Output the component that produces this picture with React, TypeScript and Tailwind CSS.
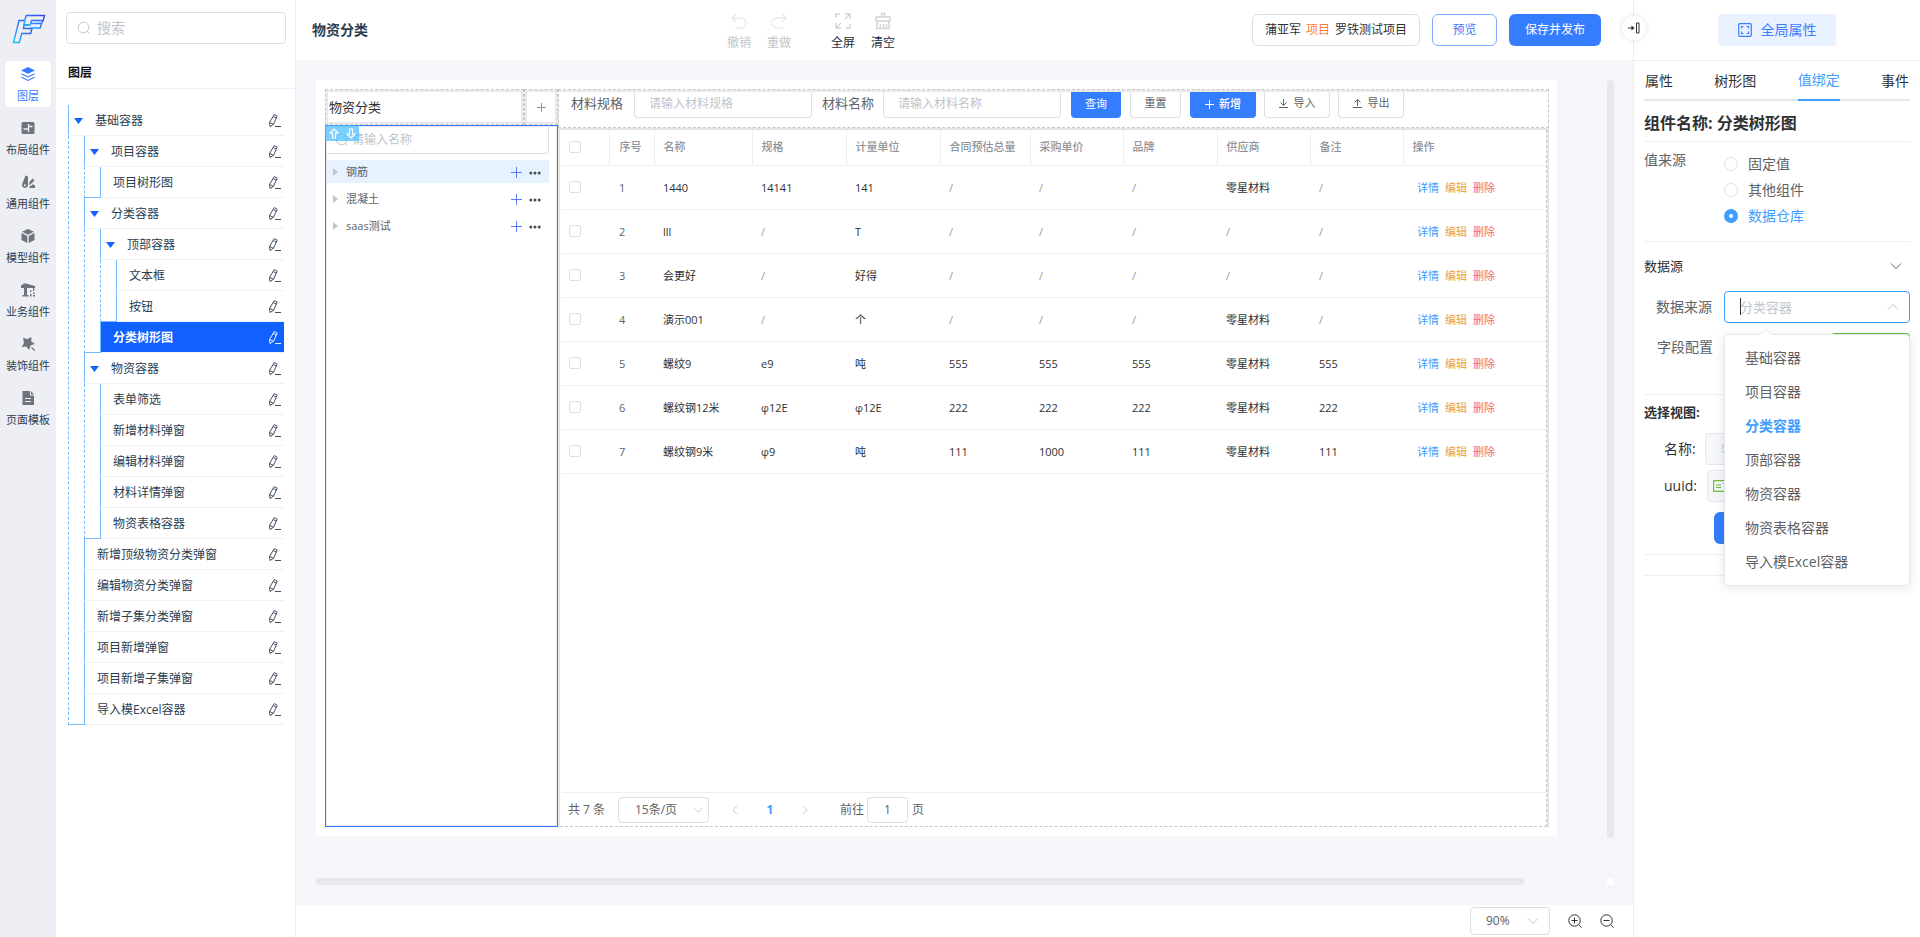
import { useState } from "react";
import type { ReactNode } from "react";
import clsx from "clsx";

type Node = { label: string; children?: Node[] };

const tree: Node = {
  label: "基础容器",
  children: [
    { label: "项目容器", children: [{ label: "项目树形图" }] },
    {
      label: "分类容器",
      children: [
        { label: "顶部容器", children: [{ label: "文本框" }, { label: "按钮" }] },
        { label: "分类树形图" },
      ],
    },
    {
      label: "物资容器",
      children: [
        { label: "表单筛选" },
        { label: "新增材料弹窗" },
        { label: "编辑材料弹窗" },
        { label: "材料详情弹窗" },
        { label: "物资表格容器" },
      ],
    },
    { label: "新增顶级物资分类弹窗" },
    { label: "编辑物资分类弹窗" },
    { label: "新增子集分类弹窗" },
    { label: "项目新增弹窗" },
    { label: "项目新增子集弹窗" },
    { label: "导入模Excel容器" },
  ],
};

const columns = ["名称", "规格", "计量单位", "合同预估总量", "采购单价", "品牌", "供应商", "备注"];

const rows = [
  ["1440", "14141", "141", "/", "/", "/", "零星材料", "/"],
  ["lll", "/", "T", "/", "/", "/", "/", "/"],
  ["会更好", "/", "好得", "/", "/", "/", "/", "/"],
  ["演示001", "/", "个", "/", "/", "/", "零星材料", "/"],
  ["螺纹9", "e9", "吨", "555", "555", "555", "零星材料", "555"],
  ["螺纹钢12米", "φ12E", "φ12E", "222", "222", "222", "零星材料", "222"],
  ["螺纹钢9米", "φ9", "吨", "111", "1000", "111", "零星材料", "111"],
];

const sources = ["基础容器", "项目容器", "分类容器", "顶部容器", "物资容器", "物资表格容器", "导入模Excel容器"];

const rail: { label: string; icon: ReactNode }[] = [
  {
    label: "图层",
    icon: (
      <>
        <path d="M8 1l7 3.4-7 3.4-7-3.4z" fill="currentColor" />
        <path d="M1.5 7.8L8 11l6.500-3.200M1.500 11.300L8 14.500l6.500-3.200" fill="none" stroke="currentColor" strokeWidth="1.1" />
      </>
    ),
  },
  {
    label: "布局组件",
    icon: (
      <>
        <rect x="1.500" y="2" width="13" height="12" rx="1.500" fill="currentColor" />
        <path d="M8.500 4v8M3.500 9h5M8.500 6.500h4" stroke="#eeeff4" strokeWidth="1.300" fill="none" />
      </>
    ),
  },
  {
    label: "通用组件",
    icon: (
      <>
        <path d="M5.500 1.500L8 2.500v9a2.800 2.800 0 1 1-5.800-1.500z" fill="currentColor" />
        <path d="M9.300 8.500l3.200-4 2 2-5.200 5z" fill="currentColor" />
        <path d="M9.500 12.800l3.500-2.600 2 1.300V14H9.300z" fill="currentColor" />
        <circle cx="4.900" cy="11.300" r="1" fill="#eeeff4" />
      </>
    ),
  },
  {
    label: "模型组件",
    icon: (
      <path d="M8 1l6 2.800L8 6.800 2 3.800zM1.500 5l5.800 2.900v7.100L1.500 12zM14.500 5L8.700 7.900v7.100l5.800-3z" fill="currentColor" />
    ),
  },
  {
    label: "业务组件",
    icon: (
      <path d="M1 3.500L4 1.500h2l9 2.500v2H7v7h1.500v1.500h-6V13H4V6H1zM10 8.500h1.500V10H10zM13 6h1.200v3H13zM10 12h1.500v2.500H10zM13 10.500h1.500V12H13zM13 13h2v1.500h-2z" fill="currentColor" />
    ),
  },
  {
    label: "装饰组件",
    icon: (
      <>
        <path d="M3 1.500l4 1.700L11.500 1l-.3 4.300L15 8l-4.200 1.300L9 14l-2.700-3.500-4.600.500 2.300-4z" fill="currentColor" />
        <path d="M11.500 11.500l3.200 3" stroke="currentColor" strokeWidth="1.200" />
      </>
    ),
  },
  {
    label: "页面模板",
    icon: (
      <>
        <path d="M2.500 1h7.500v4.500h4V15H2.500zM11 1l3 3.500h-3z" fill="currentColor" />
        <path d="M5 8.500h6M5 11.500h6" stroke="#eeeff4" strokeWidth="1.200" />
      </>
    ),
  },
];

function Logo() {
  return (
    <svg viewBox="0 0 34 30" className="h-[30px] w-[34px]" fill="none" strokeWidth="1.4">
      <defs>
        <linearGradient id="logo" x1="0" y1="1" x2="1" y2="0">
          <stop offset="0" stopColor="#12c8ff" />
          <stop offset="0.5" stopColor="#2f7bff" />
          <stop offset="1" stopColor="#3d3df0" />
        </linearGradient>
      </defs>
      <path d="M12 6.500H7L1.500 28.500h5.800l2.400-9h9l1.300-5H11.300l.9-3.500h4" stroke="url(#logo)" />
      <path d="M14 1.500h18.500L31.200 6.500H19.500l-.8 3h10.800l-1.200 4.500H18.400M14 1.500l-2.200 9.500h6.900M31.200 6.500L29.500 9.500" stroke="url(#logo)" />
    </svg>
  );
}

function EditIcon() {
  return (
    <svg viewBox="0 0 13 13" className="h-[13px] w-[13px]" fill="none" stroke="currentColor" strokeWidth="0.9">
      <path d="M6.200 0.600l3 1.500-3.700 8.200L2 12.500l-.5-4zM5.300 2.600l3 1.500M1.600 8.500l3.700 1.700M7 12.500h6" />
    </svg>
  );
}

function Chevron({ up = false, className }: { up?: boolean; className?: string }) {
  return (
    <svg viewBox="0 0 12 12" className={clsx("pointer-events-none h-3 w-3", className)} fill="none" stroke="currentColor">
      <path d={up ? "M1 8.500l5-5 5 5" : "M1 3.500l5 5 5-5"} />
    </svg>
  );
}

function SearchIcon() {
  return (
    <svg viewBox="0 0 14 14" className="h-[14px] w-[14px] shrink-0" fill="none" stroke="#c0c4cc">
      <circle cx="6.500" cy="6.500" r="5.300" />
      <path d="M10.300 10.300l2 2.200" />
    </svg>
  );
}

function TreeNode({ node, selected, onSelect }: { node: Node; selected: string; onSelect: (s: string) => void }) {
  const active = node.label === selected;
  return (
    <li>
      <div
        className={clsx(
          "flex h-[31px] items-center border-b border-l border-b-[#f0f1f4] border-l-[#79bbff] pt-px pr-[3px]",
          active ? "bg-[#1061ff] font-bold text-white" : "text-[#2c3e50]",
        )}
      >
        {node.children && (
          <svg viewBox="0 0 9 6" className="mr-3 ml-[5px] h-[6px] w-[9px] shrink-0">
            <path d="M0 0h9L4.500 6z" fill="#1061ff" />
          </svg>
        )}
        <button onClick={() => onSelect(node.label)} className={clsx("flex-1 text-left text-xs", !node.children && "pl-3")}>
          {node.label}
        </button>
        <button aria-label="编辑">
          <EditIcon />
        </button>
      </div>
      {node.children && (
        <ul className="relative border-l border-dashed border-[#79bbff] pl-[15px]">
          {node.children.map((c) => (
            <TreeNode key={c.label} node={c} selected={selected} onSelect={onSelect} />
          ))}
          <span className="absolute bottom-0 -left-px h-px w-[17px] bg-[#79bbff]" />
        </ul>
      )}
    </li>
  );
}

function Sidebar() {
  const [selected, setSelected] = useState("分类树形图");
  return (
    <aside className="w-60 shrink-0 border-r border-[#ebeef5] bg-white">
      <label className="mx-[10px] mt-3 mr-[9px] flex h-8 items-center gap-[6px] rounded border border-[#dcdfe6] pl-[10px]">
        <SearchIcon />
        <input aria-label="搜索" placeholder="搜索" className="w-full min-w-0 text-sm outline-none placeholder:text-[#c0c4cc]" />
      </label>
      <h2 className="mt-4 h-[29px] border-b border-[#ebeef5] pl-3 text-xs leading-[26px] font-bold text-[#111]">图层</h2>
      <ul className="mt-4 pr-[11px] pl-3">
        <TreeNode node={tree} selected={selected} onSelect={setSelected} />
      </ul>
    </aside>
  );
}

function Tool({ label, off, children }: { label: string; off?: boolean; children: ReactNode }) {
  return (
    <button disabled={off} className={clsx("flex w-10 flex-col items-center gap-[5px] text-xs leading-4", off ? "text-[#c0c4cc]" : "text-[#1f2d3d]")}>
      <svg viewBox="0 0 18 18" className={clsx("h-[18px] w-[18px]", off ? "text-[#e9eaed]" : "text-[#d4d4d4]")} fill="none" stroke="currentColor" strokeWidth="1.4">
        {children}
      </svg>
      {label}
    </button>
  );
}

function Header() {
  return (
    <header className="flex h-[60px] shrink-0 bg-white pr-8">
      <h1 className="w-[423px] shrink-0 pl-4 text-sm leading-[60px] font-bold text-[#2c3e50]">物资分类</h1>
      <div className="flex pt-3">
        <Tool label="撤销" off>
          <path d="M6 2L2 6l4 4M2 6h9a5 5 0 0 1 0 10H5" />
        </Tool>
        <Tool label="重做" off>
          <path d="M12 2l4 4-4 4M16 6H7a5 5 0 0 0 0 10h6" />
        </Tool>
        <span className="w-6" />
        <Tool label="全屏">
          <path d="M2 6V2h4M16 12v4h-4M11 2h5v5M16 2l-5 5M7 16H2v-5M2 16l5-5" />
        </Tool>
        <Tool label="清空">
          <path d="M7.500 5V1.500h3V5M2 5h14v4H2zM3.500 9L2.500 16.500h13L14.500 9M6.500 12l-.5 4M9.500 12v4M12.500 12v4" />
        </Tool>
      </div>
      <div className="ml-auto flex gap-3 pt-[14px] text-xs">
        <div className="flex h-8 items-center gap-[5px] rounded-md border border-[#dcdfe6] px-3 text-[#303133]">
          <span>蒲亚军</span>
          <span className="text-[#ff7d2e]">项目</span>
          <span>罗铁测试项目</span>
        </div>
        <button className="h-8 w-[65px] rounded-md border border-[#7fabff] text-[#3a7dff]">预览</button>
        <button className="h-8 w-[92px] rounded-md bg-[#347dff] text-white">保存并发布</button>
      </div>
    </header>
  );
}

// grey frame the designer draws round each container
const frame = "border border-dashed border-[#c6c6c6] shadow-[inset_0_0_0_2px_#e9e9e9]";

function CategoryTree() {
  return (
    <section className="flex w-[233px] shrink-0 flex-col">
      <div className="flex h-9">
        <div className={clsx("flex-1 pl-[3px] text-[13px] leading-[34px] text-[#303133]", frame)}>物资分类</div>
        <button aria-label="新增分类" className={clsx("flex w-[34px] items-center justify-center text-[#909399]", frame)}>
          <svg viewBox="0 0 9 9" className="h-[9px] w-[9px]" stroke="currentColor">
            <path d="M4.500 0v9M0 4.500h9" />
          </svg>
        </button>
      </div>
      <div className="relative flex-1 border border-[#347dff] pr-2 shadow-[inset_0_0_0_1px_#e9e9e9]">
        <label className="ml-px flex h-7 items-center gap-[3px] rounded-br border-r border-b border-[#dcdfe6] pl-2">
          <SearchIcon />
          <input aria-label="请输入名称" placeholder="请输入名称" className="w-full min-w-0 text-xs outline-none placeholder:text-[#c0c4cc]" />
        </label>
        <span className="absolute -top-px -left-px flex h-4 w-[34px] items-center justify-around bg-[#45bcff]/70 text-white">
          <svg viewBox="0 0 10 11" className="h-[11px] w-[10px]" fill="none" stroke="currentColor" strokeWidth="1.2">
            <path d="M5 1l4 4H6.500v5h-3V5H1z" />
          </svg>
          <svg viewBox="0 0 10 11" className="h-[11px] w-[10px]" fill="none" stroke="currentColor" strokeWidth="1.2">
            <path d="M5 10l4-4H6.500V1h-3v5H1z" />
          </svg>
        </span>
        <ul className="mt-[6px] ml-px flex flex-col gap-1 text-[11px] text-[#606266]">
          {["钢筋", "混凝土", "saas测试"].map((t, i) => (
            <li key={t} className={clsx("flex h-[23px] items-center pt-px pr-2 pl-[6px]", i === 0 && "bg-[#e6f2ff]")}>
              <svg viewBox="0 0 5 8" className="mr-2 h-2 w-[5px]">
                <path d="M0 0l5 4-5 4z" fill="#c0c4cc" />
              </svg>
              <span className="flex-1">{t}</span>
              <button aria-label="新增" className="mr-[7px] text-[#5b7cff]">
                <svg viewBox="0 0 11 11" className="h-[11px] w-[11px]" stroke="currentColor">
                  <path d="M5.500 0v11M0 5.500h11" />
                </svg>
              </button>
              <button aria-label="更多" className="pt-[2px] text-[#4a4d52]">
                <svg viewBox="0 0 12 4" className="h-1 w-3" fill="currentColor">
                  <circle cx="1.800" cy="2" r="1.500" />
                  <circle cx="6" cy="2" r="1.500" />
                  <circle cx="10.200" cy="2" r="1.500" />
                </svg>
              </button>
            </li>
          ))}
        </ul>
      </div>
    </section>
  );
}

function FilterForm() {
  const input = "h-7 min-w-0 w-[178px] rounded-b border border-t-0 border-[#dcdfe6] px-[14px] text-xs outline-none placeholder:text-[#c0c4cc]";
  const plain = "flex h-7 items-center justify-center rounded-b border border-t-0 border-[#dcdfe6] text-[#606266]";
  return (
    <div className="h-[39px] border border-dashed border-[#c6c6c6]">
      <form className="flex h-full items-start overflow-hidden border-t-2 border-[#e9e9e9] pl-3 text-[11px]" onSubmit={(e) => e.preventDefault()}>
        <div className="-mt-[2px] flex items-center">
          <label htmlFor="spec" className="w-[63px] text-[13px] text-[#606266]">材料规格</label>
          <input id="spec" className={input} placeholder="请输入材料规格" />
          <label htmlFor="name" className="ml-[10px] w-[61px] text-[13px] text-[#606266]">材料名称</label>
          <input id="name" className={input} placeholder="请输入材料名称" />
          <button className="ml-[10px] h-7 w-[50px] rounded-b bg-[#347dff] text-white">查询</button>
          <button type="reset" className={clsx("ml-[9px] w-[51px]", plain)}>重置</button>
          <button type="button" className="ml-[9px] flex h-7 w-[66px] items-center justify-center gap-[5px] rounded-b bg-[#347dff] font-medium text-white">
            <svg viewBox="0 0 9 9" className="h-[9px] w-[9px]" stroke="currentColor">
              <path d="M4.500 0v9M0 4.500h9" />
            </svg>
            新增
          </button>
          <button type="button" className={clsx("ml-2 w-[66px] gap-[6px]", plain)}>
            <svg viewBox="0 0 9 9" className="h-[9px] w-[9px]" fill="none" stroke="currentColor">
              <path d="M4.500 0v6M1.500 3.500l3 3 3-3M0 8.500h9" />
            </svg>
            导入
          </button>
          <button type="button" className={clsx("ml-2 w-[66px] gap-[6px]", plain)}>
            <svg viewBox="0 0 9 9" className="h-[9px] w-[9px]" fill="none" stroke="currentColor">
              <path d="M4.500 7V1M1.500 3.500l3-3 3 3M0 8.500h9" />
            </svg>
            导出
          </button>
        </div>
      </form>
    </div>
  );
}

function MaterialTable() {
  const box = "block h-3 w-3 appearance-none rounded-[2px] border border-[#dcdfe6] bg-white";
  return (
    <table className="w-full table-fixed border-collapse text-left text-[11px] text-[#303133]">
      <colgroup>
        <col className="w-[47px]" />
        <col className="w-[45px]" />
        <col className="w-[98px]" />
        <col className="w-[94px]" />
        <col className="w-[94px]" />
        <col className="w-[90px]" />
        <col className="w-[93px]" />
        <col className="w-[94px]" />
        <col className="w-[93px]" />
        <col className="w-[93px]" />
        <col />
      </colgroup>
      <thead className="text-[#909399]">
        <tr className="h-[35px] border-b border-[#ebeef5]">
          <th className="border-r border-[#ebeef5] pl-[7px]">
            <input type="checkbox" aria-label="全选" className={box} />
          </th>
          <th className="border-r border-[#ebeef5] pl-[10px] font-medium">序号</th>
          {columns.map((c) => (
            <th key={c} className="border-r border-[#ebeef5] pl-[9px] font-medium whitespace-nowrap">{c}</th>
          ))}
          <th className="pl-[9px] font-medium">操作</th>
        </tr>
      </thead>
      <tbody>
        {rows.map((r, i) => (
          <tr key={i} className="h-11 border-b border-[#ebeef5]">
            <td className="pl-[7px]">
              <input type="checkbox" aria-label={`选择${i + 1}`} className={box} />
            </td>
            <td className="pt-[2px] pl-[10px] text-[#606266]">{i + 1}</td>
            {r.map((v, j) => (
              <td key={j} className={clsx("pt-[2px] pl-[9px]", v === "/" && "text-[#999]")}>{v}</td>
            ))}
            <td className="pt-[2px] pl-[14px]">
              <div className="flex gap-[6px]">
                <a href="#" className="text-[#409eff]">详情</a>
                <a href="#" className="text-[#e6a23c]">编辑</a>
                <a href="#" className="text-[#f56c6c]">删除</a>
              </div>
            </td>
          </tr>
        ))}
      </tbody>
    </table>
  );
}

function Pagination() {
  return (
    <nav className="flex h-[34px] items-center border-t border-[#ebeef5] pl-[6px] text-xs text-[#606266]">
      <span className="w-[50px]">共 7 条</span>
      <div className="relative">
        <select aria-label="每页条数" className="h-[26px] w-[91px] appearance-none rounded border border-[#dcdfe6] pl-4 outline-none">
          <option>15条/页</option>
        </select>
        <Chevron className="absolute top-2 right-[6px] !h-[10px] !w-[10px] text-[#c0c4cc]" />
      </div>
      <button aria-label="上一页" className="ml-[21px] text-[#c0c4cc]">
        <Chevron className="!h-[10px] !w-[10px] rotate-90" />
      </button>
      <button className="ml-6 w-3 font-bold text-[#409eff]">1</button>
      <button aria-label="下一页" className="ml-6 text-[#c0c4cc]">
        <Chevron className="!h-[10px] !w-[10px] -rotate-90" />
      </button>
      <label htmlFor="page" className="ml-[30px]">前往</label>
      <input id="page" defaultValue="1" className="ml-[3px] h-[26px] w-[41px] rounded border border-[#dcdfe6] text-center outline-none" />
      <span className="ml-1">页</span>
    </nav>
  );
}

function Canvas() {
  return (
    <div className="flex flex-1 flex-col bg-[#f4f6fa] py-5 pr-[19px] pl-5">
      <div className="flex flex-1">
        <div className="mb-[2px] flex min-w-0 flex-1 bg-white py-[9px] pr-2 pl-[9px]">
          <CategoryTree />
          <section className="flex min-w-0 flex-1 flex-col">
            <FilterForm />
            <div className="flex flex-1 flex-col border-x-2 border-t-2 border-[#e4e4e4]">
              <div className="flex flex-1 flex-col border-r border-b border-dashed border-[#c6c6c6] pl-[2px]">
                <div className="flex-1">
                  <MaterialTable />
                </div>
                <Pagination />
              </div>
            </div>
          </section>
        </div>
        <div className="ml-[50px] w-[7px] rounded-full bg-[#e6e8ec]" />
      </div>
      <div className="mt-10 flex h-[7px] justify-between">
        <div className="mr-[83px] flex-1 rounded-full bg-[#e6e8ec]" />
        <div className="w-[7px] bg-white" />
      </div>
    </div>
  );
}

function Zoom({ minus }: { minus?: boolean }) {
  return (
    <button aria-label={minus ? "缩小" : "放大"} className="text-[#303133]">
      <svg viewBox="0 0 14 14" className="h-[14px] w-[14px]" fill="none" stroke="currentColor">
        <circle cx="6.500" cy="6.500" r="5.700" />
        <path d={minus ? "M3.500 6.500h6M10.600 10.600l3 3" : "M3.500 6.500h6M6.500 3.500v6M10.600 10.600l3 3"} />
      </svg>
    </button>
  );
}

function SourceSelect() {
  const [value, setValue] = useState("分类容器");
  return (
    <div className="relative flex-1">
      <input
        id="source"
        readOnly
        placeholder={value}
        className="block h-8 w-full rounded border border-[#409eff] px-[15px] text-[13px] outline-none placeholder:text-[#c0c4cc]"
      />
      <span className="absolute top-[7px] left-4 h-[17px] w-px bg-[#303133]" />
      <Chevron up className="absolute top-[10px] right-[11px] text-[#c0c4cc]" />
      <div className="absolute top-[43px] left-0 z-10 w-full rounded border border-[#e4e7ed] bg-white py-[6px] text-sm text-[#606266] shadow-[0_2px_12px_rgba(0,0,0,0.1)]">
        <span className="absolute -top-[5px] left-[37px] h-2 w-2 rotate-45 border-t border-l border-[#ebeef5] bg-white" />
        <ul>
          {sources.map((s) => (
            <li key={s}>
              <button
                onClick={() => setValue(s)}
                className={clsx("block h-[34px] w-full pl-5 text-left", s === value && "font-bold text-[#409eff]")}
              >
                {s}
              </button>
            </li>
          ))}
        </ul>
      </div>
    </div>
  );
}

function PropertyPanel() {
  const [kind, setKind] = useState("数据仓库");
  return (
    <aside className="relative w-[287px] shrink-0 border-l border-[#ebeef5] bg-white text-sm text-[#606266]">
      <button aria-label="收起" className="absolute top-4 -left-[12px] z-10 flex h-6 w-6 items-center justify-center rounded-full bg-white text-[#303133] shadow-[0_0_6px_rgba(0,0,0,0.12)]">
        <svg viewBox="0 0 12 12" className="h-3 w-3" fill="none" stroke="currentColor">
          <path d="M0 6h6M8.500 1h2.500v10H8.500z" />
          <path d="M3.500 3.500L6.500 6l-3 2.500z" fill="currentColor" stroke="none" />
        </svg>
      </button>
      <div className="flex h-[61px] justify-center border-b border-[#ebeef5] pt-[14px]">
        <button className="flex h-8 w-[118px] items-center justify-center gap-[9px] rounded bg-[#eaf2ff] text-[#3a7dff]">
          <svg viewBox="0 0 14 14" className="h-[14px] w-[14px]" fill="none" stroke="currentColor" strokeWidth="1.2">
            <rect x="0.700" y="0.700" width="12.600" height="12.600" rx="1" />
            <path d="M3.500 5.500v-2h2M8.500 3.500h2v2M10.500 8.500v2h-2M5.500 10.500h-2v-2" />
          </svg>
          全局属性
        </button>
      </div>
      <div className="px-[10px]">
        <div className="flex h-10 justify-between border-b-2 border-[#e4e7ed] px-px text-[#303133]">
          {["属性", "树形图", "值绑定", "事件"].map((t) => (
            <button key={t} className={clsx("h-10", t === "值绑定" && "border-b-2 border-[#409eff] text-[#409eff]")}>
              {t}
            </button>
          ))}
        </div>
        <h3 className="h-[41px] border-b border-[#ebeef5] pt-1 text-base leading-9 font-bold text-[#303133]">组件名称: 分类树形图</h3>
        <fieldset className="flex border-b border-[#ebeef5] pt-[9px] pb-3">
          <span className="w-20 leading-[18px]">值来源</span>
          <div>
            {["固定值", "其他组件", "数据仓库"].map((k) => (
              <label key={k} className={clsx("flex h-[26px] items-center gap-[10px]", k === kind && "text-[#409eff]")}>
                <input
                  type="radio"
                  name="kind"
                  checked={k === kind}
                  onChange={() => setKind(k)}
                  className="h-[14px] w-[14px] appearance-none rounded-full border border-[#dcdfe6] checked:border-[5px] checked:border-[#409eff]"
                />
                {k}
              </label>
            ))}
          </div>
        </fieldset>
        <div className="flex h-12 items-center justify-between pr-2 text-[13px] text-[#303133]">
          数据源
          <Chevron className="text-[#606266]" />
        </div>
        <div className="mt-px flex items-center gap-3 pl-3">
          <label htmlFor="source">数据来源</label>
          <SourceSelect />
        </div>
        <div className="mt-2 flex h-8 items-start justify-between pl-[13px] leading-8">
          <span>字段配置</span>
          <button aria-label="配置字段" className="mt-[2px] h-[30px] w-[79px] rounded bg-[#67c23a]" />
        </div>
        <div className="mt-[31px] h-[35px] border-t border-[#ebeef5] text-[13px] leading-[34px] font-bold text-[#303133]">选择视图:</div>
        <div className="mt-1 flex items-center pl-5 text-[#303133]">
          <label htmlFor="view" className="w-[41px]">名称:</label>
          <input id="view" disabled placeholder="物资分类" className="h-8 w-[150px] rounded border border-[#e4e7ed] bg-[#f5f7fa] px-[15px] placeholder:text-[#c0c4cc]" />
        </div>
        <div className="mt-[5px] flex items-center pl-5 text-[#303133]">
          <span className="w-[43px]">uuid:</span>
          <div className="flex h-8 w-[150px] items-center rounded border border-[#e4e7ed] bg-[#f5f7fa] pl-[5px]">
            <svg viewBox="0 0 16 12" className="h-3 w-4" fill="none" stroke="#67c23a">
              <rect x="0.500" y="0.500" width="15" height="11" rx="1" strokeWidth="1.400" />
              <path d="M3 5h5M3 7.500h5M10 3.500h3" />
            </svg>
          </div>
        </div>
        <div className="mt-[10px] border-b border-[#ebeef5] pb-[10px] pl-[70px]">
          <button aria-label="选择视图" className="block h-8 w-[120px] rounded-md bg-[#347dff]" />
        </div>
        <div className="h-[21px] border-b border-[#ebeef5]" />
      </div>
    </aside>
  );
}

export default function App() {
  return (
    <div className="flex min-h-screen bg-white font-['Open_Sans','Noto_Sans_CJK_SC',sans-serif]">
      <nav className="flex w-14 shrink-0 flex-col items-center bg-[#eeeff4]">
        <div className="mt-[14px] mb-[17px] pl-[2px]">
          <Logo />
        </div>
        <div className="flex flex-col gap-2">
          {rail.map((r, i) => (
            <button
              key={r.label}
              className={clsx(
                "flex h-[46px] w-[46px] flex-col items-center gap-[6px] rounded-[5px] pt-[5px] text-[11px] leading-4 whitespace-nowrap",
                i === 0 ? "bg-white text-[#347dff]" : "text-[#2c3e50]",
              )}
            >
              <svg viewBox="0 0 16 16" className={clsx("h-4 w-4 shrink-0", i > 0 && "text-[#6f747c]")}>{r.icon}</svg>
              {r.label}
            </button>
          ))}
        </div>
      </nav>
      <Sidebar />
      <main className="flex min-w-0 flex-1 flex-col">
        <Header />
        <Canvas />
        <footer className="flex h-8 shrink-0 items-center justify-end gap-[18px] bg-white pr-[19px]">
          <div className="relative">
            <select aria-label="缩放" className="h-7 w-20 appearance-none rounded border border-[#dcdfe6] pl-[15px] text-xs text-[#606266] outline-none">
              <option>90%</option>
            </select>
            <Chevron className="absolute top-2 right-[11px] text-[#c0c4cc]" />
          </div>
          <Zoom />
          <Zoom minus />
        </footer>
      </main>
      <PropertyPanel />
    </div>
  );
}
